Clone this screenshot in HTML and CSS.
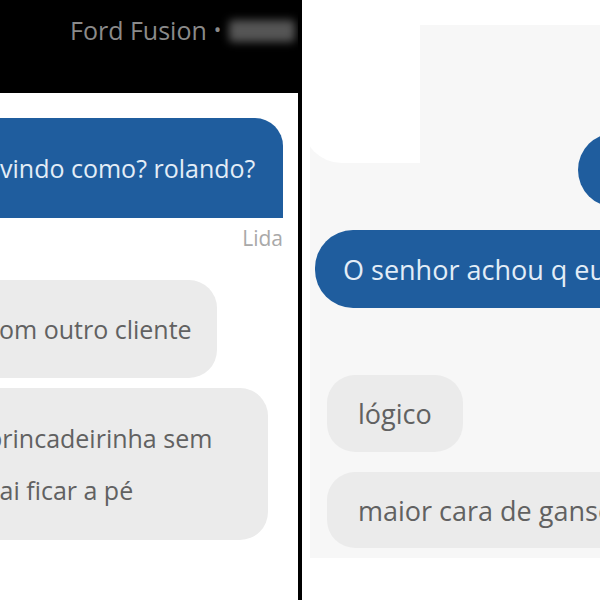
FILE: index.html
```html
<!DOCTYPE html>
<html lang="pt-BR">
<head>
    <meta charset="UTF-8">
    <title>Conversa</title>
    <link rel="stylesheet" href="styles.css">
</head>
<body>
    <div class="collage">
        <section class="shot shot-left">
            <header class="top-bar">
                <span class="car-name">Ford Fusion</span>
                <span class="dot">•</span>
                <span class="plate"></span>
            </header>
            <div class="chat">
                <div class="bubble sent sent-left">vindo como? rolando?</div>
                <div class="status">Lida</div>
                <div class="bubble recv recv-one">com outro cliente</div>
                <div class="bubble recv recv-two">brincadeirinha sem<br>vai ficar a pé</div>
            </div>
        </section>

        <section class="shot shot-right">
            <div class="screen">
                <div class="erased"></div>
                <div class="bubble sent sent-dot"></div>
                <div class="bubble sent sent-long">O senhor achou q eu</div>
                <div class="bubble recv recv-short">lógico</div>
                <div class="bubble recv recv-wide">maior cara de ganso</div>
            </div>
        </section>
    </div>
</body>
</html>
```

FILE: styles.css
```css
html, body {
    margin: 0;
    padding: 0;
    background: #fff;
}

.collage {
    display: flex;
    width: 600px;
    height: 600px;
    overflow: hidden;
    font-family: "Open Sans", "Noto Sans", sans-serif;
}

.shot {
    position: relative;
    height: 600px;
    overflow: hidden;
    background: #fff;
}

.shot-left {
    width: 298px;
    flex: none;
    border-right: 4px solid #000;
}

.shot-right {
    flex: 1;
}

/* black title bar */
.top-bar {
    height: 93px;
    background: #000;
    display: flex;
    align-items: flex-start;
    padding: 13px 0 0 70px;
    box-sizing: border-box;
    color: #8a8a8a;
    font-size: 25px;
    white-space: nowrap;
}

.dot {
    margin: 0 8px 0 7px;
    font-size: 20px;
    line-height: 34px;
}

.plate {
    width: 66px;
    height: 22px;
    margin-top: 7px;
    background: #555;
    border-radius: 4px;
    filter: blur(4px);
}

.chat {
    padding-top: 25px;
}

.bubble {
    display: flex;
    align-items: center;
    box-sizing: border-box;
    font-size: 25px;
    white-space: nowrap;
}

.sent {
    background: #1f5d9e;
    color: #e3edf7;
}

.recv {
    background: #ebebeb;
    color: #616161;
}

.sent-left {
    height: 100px;
    margin: 0 15px 0 -40px;
    padding-left: 40px;
    border-radius: 0 28px 0 0;
}

.status {
    margin: 6px 15px 0 0;
    text-align: right;
    font-size: 21px;
    color: #a9a9a9;
}

.recv-one {
    height: 98px;
    margin: 28px 81px 0 -40px;
    padding-left: 27px;
    border-radius: 0 28px 28px 0;
}

.recv-two {
    height: 152px;
    margin: 10px 30px 0 -40px;
    padding-left: 27px;
    line-height: 52px;
    border-radius: 0 28px 28px 0;
}

/* right screenshot */
.screen {
    position: relative;
    height: 533px;
    margin: 25px 0 0 8px;
    padding-top: 108px;
    box-sizing: border-box;
    background: #f7f7f7;
}

.erased {
    position: absolute;
    left: -8px;
    top: 0;
    width: 118px;
    height: 138px;
    background: #fff;
    border-radius: 0 0 0 40px;
}

.sent-dot {
    width: 80px;
    height: 74px;
    margin-left: 268px;
    border-radius: 37px 0 0 37px;
}

.sent-long {
    height: 78px;
    margin: 23px 0 0 5px;
    padding-left: 28px;
    font-size: 27px;
    border-radius: 38px 0 0 38px;
}

.recv-short {
    width: 136px;
    height: 77px;
    margin: 67px 0 0 17px;
    padding-left: 31px;
    font-size: 27px;
    border-radius: 28px;
}

.recv-wide {
    height: 76px;
    margin: 20px 0 0 17px;
    padding-left: 31px;
    font-size: 27px;
    border-radius: 28px 0 0 28px;
}
```
